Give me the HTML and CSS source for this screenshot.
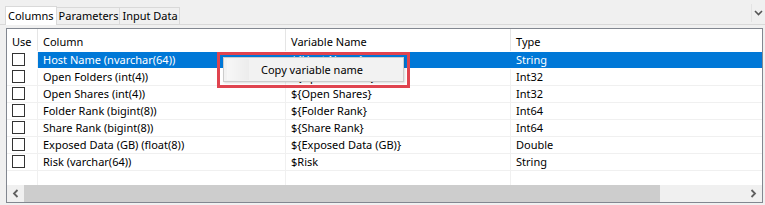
FILE: index.html
```html
<!DOCTYPE html>
<html>
<head>
<meta charset="utf-8">
<link rel="stylesheet" href="styles.css">
</head>
<body>
<div class="window">
  <div class="tabstrip">
    <div class="tab selected">Columns</div>
    <div class="tab">Parameters</div>
    <div class="tab">Input Data</div>
    <div class="tab-spacer"></div>
    <div class="tab-menu"><svg width="9" height="6" viewBox="0 0 9 6"><path d="M1 1 L4.5 4.5 L8 1" fill="none" stroke="#555" stroke-width="1.6"/></svg></div>
  </div>
  <div class="panel">
    <div class="list">
      <div class="row header">
        <div class="cell c-use">Use</div>
        <div class="cell c-col">Column</div>
        <div class="cell c-var">Variable Name</div>
        <div class="cell c-type">Type</div>
      </div>
      <div class="row sel">
        <div class="cell c-use"><span class="cb"></span></div>
        <div class="cell c-col">Host Name (nvarchar(64))</div>
        <div class="cell c-var">${Host Name}</div>
        <div class="cell c-type">String</div>
      </div>
      <div class="row">
        <div class="cell c-use"><span class="cb"></span></div>
        <div class="cell c-col">Open Folders (int(4))</div>
        <div class="cell c-var">${Open Folders}</div>
        <div class="cell c-type">Int32</div>
      </div>
      <div class="row">
        <div class="cell c-use"><span class="cb"></span></div>
        <div class="cell c-col">Open Shares (int(4))</div>
        <div class="cell c-var">${Open Shares}</div>
        <div class="cell c-type">Int32</div>
      </div>
      <div class="row">
        <div class="cell c-use"><span class="cb"></span></div>
        <div class="cell c-col">Folder Rank (bigint(8))</div>
        <div class="cell c-var">${Folder Rank}</div>
        <div class="cell c-type">Int64</div>
      </div>
      <div class="row">
        <div class="cell c-use"><span class="cb"></span></div>
        <div class="cell c-col">Share Rank (bigint(8))</div>
        <div class="cell c-var">${Share Rank}</div>
        <div class="cell c-type">Int64</div>
      </div>
      <div class="row">
        <div class="cell c-use"><span class="cb"></span></div>
        <div class="cell c-col">Exposed Data (GB) (float(8))</div>
        <div class="cell c-var">${Exposed Data (GB)}</div>
        <div class="cell c-type">Double</div>
      </div>
      <div class="row">
        <div class="cell c-use"><span class="cb"></span></div>
        <div class="cell c-col">Risk (varchar(64))</div>
        <div class="cell c-var">$Risk</div>
        <div class="cell c-type">String</div>
      </div>
      <div class="row filler">
        <div class="cell c-use"></div>
        <div class="cell c-col"></div>
        <div class="cell c-var"></div>
        <div class="cell c-type"></div>
      </div>
      <div class="hscroll">
        <div class="arrow"><svg width="7" height="9" viewBox="0 0 7 9"><path d="M5.5 1 L2 4.5 L5.5 8" fill="none" stroke="#606060" stroke-width="1.8"/></svg></div>
        <div class="thumb"></div>
        <div class="track"></div>
        <div class="arrow"><svg width="7" height="9" viewBox="0 0 7 9"><path d="M1.5 1 L5 4.5 L1.5 8" fill="none" stroke="#606060" stroke-width="1.8"/></svg></div>
      </div>
    </div>
  </div>
  <div class="highlight"></div>
  <div class="menu">
    <div class="menu-icon"></div>
    <div class="menu-text">Copy variable name</div>
  </div>
</div>
</body>
</html>
```
FILE: styles.css
```css
html, body {
  margin: 0;
  padding: 0;
  background: #f0f0f0;
}
body {
  font-family: "Noto Sans", "Liberation Sans", sans-serif;
  font-size: 11px;
  color: #000;
}
.window {
  position: relative;
  width: 765px;
  height: 205px;
  overflow: hidden;
}
.tabstrip {
  display: flex;
  align-items: flex-end;
  height: 25px;
  padding-left: 5px;
  border-bottom: 1px solid #d9d9d9;
  box-sizing: border-box;
}
.tab {
  height: 16px;
  line-height: 16px;
  padding: 0 1px 0 2px;
  border: 1px solid #d9d9d9;
  border-bottom: none;
  margin-left: -1px;
  background: #f0f0f0;
}
.tab.selected {
  height: 18px;
  line-height: 18px;
  background: #fff;
  margin-left: 0;
  margin-bottom: -1px;
  padding: 0 2px;
}
.tab-spacer { flex: 1; }
.tab-menu {
  align-self: flex-start;
  margin-top: 4px;
  width: 12px;
  height: 18px;
  border-left: 1px solid #e3e3e3;
  display: flex;
  align-items: center;
  justify-content: center;
  margin-right: 1px;
}
.panel {
  padding: 3px 2px 0 6px;
}
.list {
  background: #fff;
  border: 1px solid #828790;
  height: 175px;
  display: flex;
  flex-direction: column;
  box-sizing: border-box;
}
.row {
  display: flex;
  height: 17px;
  border-bottom: 1px solid #f0f0f0;
  box-sizing: border-box;
}
.row.header {
  height: 23px;
  border-bottom: 1px solid #fff;
}
.row.header .cell {
  line-height: 26px;
  border-right: 1px solid #e5e5e5;
}
.row.filler {
  flex: 1;
  border-bottom: none;
}
.cell {
  box-sizing: border-box;
  line-height: 16px;
  padding-left: 5px;
  white-space: nowrap;
  overflow: hidden;
  border-right: 1px solid #f0f0f0;
}
.c-use { width: 31px; padding-left: 5px; }
.c-col { width: 248px; }
.c-var { width: 225px; }
.c-type { flex: 1; border-right: none; }
.row.header .c-type { border-right: none; }
.row.sel .cell:not(.c-use) {
  background: #0078d7;
  color: #fff;
  border-right-color: #0078d7;
}
.row.sel { border-bottom-color: #fff; }
.cb {
  display: block;
  width: 13px;
  height: 13px;
  border: 1px solid #333;
  box-sizing: border-box;
  margin-top: 1px;
}
.hscroll {
  display: flex;
  height: 17px;
  background: #f0f0f0;
  flex-shrink: 0;
}
.arrow {
  width: 17px;
  display: flex;
  align-items: center;
  justify-content: center;
}
.thumb {
  width: 636px;
  background: #cdcdcd;
}
.track { flex: 1; }
.highlight {
  position: absolute;
  left: 217px;
  top: 52px;
  width: 193px;
  height: 36px;
  border: 3px solid #e0444f;
  box-sizing: border-box;
}
.menu {
  position: absolute;
  left: 223px;
  top: 57px;
  width: 181px;
  height: 25px;
  background: #f2f2f2;
  border: 1px solid #cccccc;
  box-sizing: border-box;
  display: flex;
  align-items: center;
  box-shadow: 1px 1px 2px rgba(0,0,0,0.15);
}
.menu-icon {
  width: 22px;
  height: 21px;
  margin-left: 3px;
  background: linear-gradient(to right, #f7f7f7, #ececec);
}
.menu-text {
  margin-left: 12px;
}
```
